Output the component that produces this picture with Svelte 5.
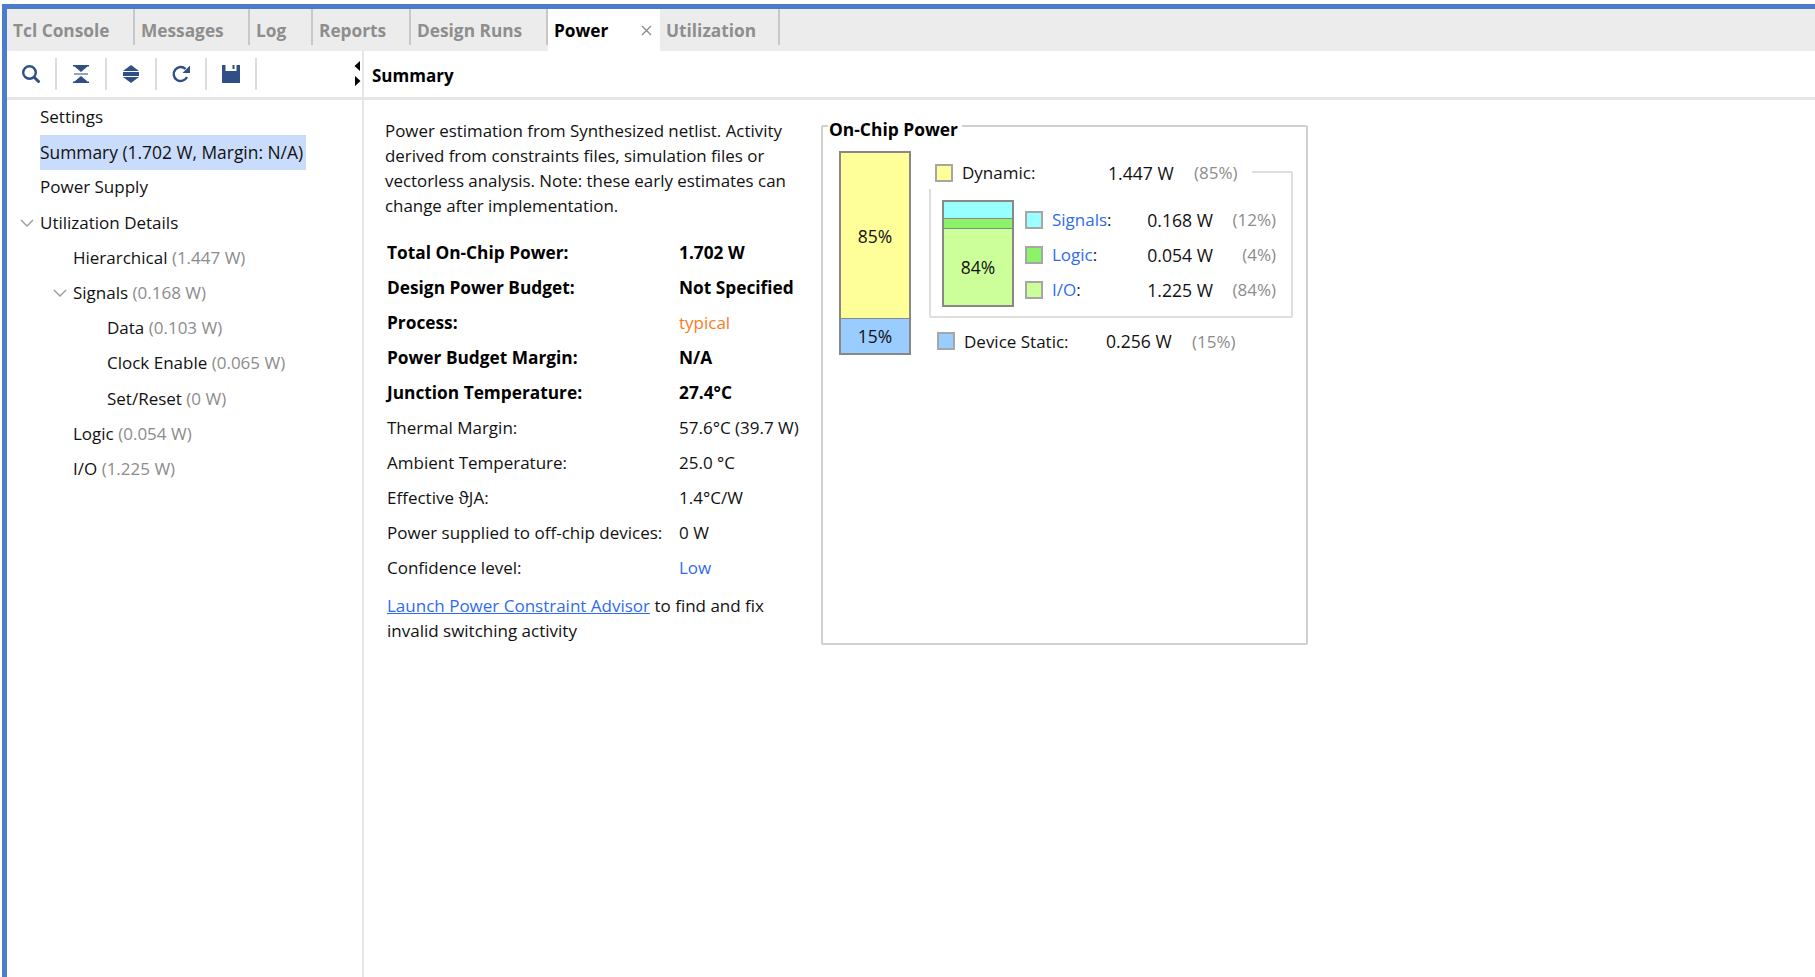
<script>
  const tabs = [
    { label: 'Tcl Console', width: 128 },
    { label: 'Messages', width: 115 },
    { label: 'Log', width: 63 },
    { label: 'Reports', width: 98 },
    { label: 'Design Runs', width: 137 },
    { label: 'Power', width: 112, active: true },
    { label: 'Utilization', width: 120 }
  ]

  const tree = [
    { label: 'Settings', level: 0 },
    { label: 'Summary (1.702 W, Margin: N/A)', level: 0, selected: true },
    { label: 'Power Supply', level: 0 },
    { label: 'Utilization Details', level: 0, open: true },
    { label: 'Hierarchical', note: '(1.447 W)', level: 1 },
    { label: 'Signals', note: '(0.168 W)', level: 1, open: true },
    { label: 'Data', note: '(0.103 W)', level: 2 },
    { label: 'Clock Enable', note: '(0.065 W)', level: 2 },
    { label: 'Set/Reset', note: '(0 W)', level: 2 },
    { label: 'Logic', note: '(0.054 W)', level: 1 },
    { label: 'I/O', note: '(1.225 W)', level: 1 }
  ]

  const facts = [
    { key: 'Total On-Chip Power:', value: '1.702 W', bold: true },
    { key: 'Design Power Budget:', value: 'Not Specified', bold: true },
    { key: 'Process:', value: 'typical', bold: true, tone: 'orange' },
    { key: 'Power Budget Margin:', value: 'N/A', bold: true },
    { key: 'Junction Temperature:', value: '27.4°C', bold: true },
    { key: 'Thermal Margin:', value: '57.6°C (39.7 W)' },
    { key: 'Ambient Temperature:', value: '25.0 °C' },
    { key: 'Effective ϑJA:', value: '1.4°C/W' },
    { key: 'Power supplied to off-chip devices:', value: '0 W' },
    { key: 'Confidence level:', value: 'Low', tone: 'blue' }
  ]

  const dynamicRows = [
    { name: 'Signals', color: '#99ffff', watts: '0.168 W', pct: '(12%)' },
    { name: 'Logic', color: '#8cf26a', watts: '0.054 W', pct: '(4%)' },
    { name: 'I/O', color: '#ccff99', watts: '1.225 W', pct: '(84%)' }
  ]
</script>

<div class="window">
  <nav class="tabs">
    {#each tabs as tab}
      <div class="tab" class:active={tab.active} style="width: {tab.width}px">
        <span>{tab.label}</span>
        {#if tab.active}
          <svg class="close" width="11" height="11" viewBox="0 0 11 11">
            <path d="M1 1 L10 10 M10 1 L1 10" stroke="#8a8a8a" stroke-width="1.3" />
          </svg>
        {/if}
      </div>
    {/each}
  </nav>

  <div class="body">
    <aside class="side">
      <div class="toolbar">
        <button aria-label="Search">
          <svg width="22" height="22" viewBox="0 0 22 22">
            <circle cx="9.5" cy="9.5" r="6.3" fill="none" stroke="#2f4f86" stroke-width="2.4" />
            <path d="M14.5 14.5 L18.5 18.5" stroke="#2f4f86" stroke-width="3" stroke-linecap="round" />
          </svg>
        </button>
        <button aria-label="Collapse all">
          <svg width="16" height="18" viewBox="0 0 16 18">
            <path d="M0 0 H16 V1.5 H14.5 L8 7 L1.5 1.5 H0 Z M1 8.4 H15 V9.6 H1 Z M8 11 L14.5 16.5 H16 V18 H0 V16.5 H1.5 Z" fill="#2f4f86" />
          </svg>
        </button>
        <button aria-label="Expand all">
          <svg width="16" height="18" viewBox="0 0 16 18">
            <path d="M8 0 L16 6 H0 Z M0 7 H16 V11 H0 Z M0 12 H16 L8 18 Z" fill="#2f4f86" />
          </svg>
        </button>
        <button aria-label="Refresh">
          <svg width="20" height="20" viewBox="0 0 20 20">
            <path d="M16 13 A7 7 0 1 1 14.6 5" fill="none" stroke="#2f4f86" stroke-width="2.4" />
            <path d="M19 1.5 V9 H11.5 Z" fill="#2f4f86" />
          </svg>
        </button>
        <button aria-label="Save">
          <svg width="18" height="18" viewBox="0 0 18 18">
            <path fill-rule="evenodd" d="M0 0 H18 V18 H0 Z M3.5 0 V6 H14.5 V0 H12.5 V4 H10.5 V0 Z" fill="#2f4f86" />
          </svg>
        </button>
        <div class="sash" aria-hidden="true">
          <svg width="7" height="28" viewBox="0 0 7 28">
            <path d="M6 1 V11 L0.5 6 Z M1 16 L6.5 21 L1 26 Z" fill="#000" />
          </svg>
        </div>
      </div>
      <ul class="tree">
        {#each tree as node}
          <li class="node level-{node.level}">
            {#if node.open}
              <svg class="chevron" width="14" height="8" viewBox="0 0 14 8">
                <path d="M1 1 L7 7 L13 1" fill="none" stroke="#9a9a9a" stroke-width="1.4" />
              </svg>
            {/if}
            <span class:selected={node.selected}>{node.label}{#if node.note}{' '}<em>{node.note}</em>{/if}</span>
          </li>
        {/each}
      </ul>
    </aside>

    <main class="main">
      <header class="header">Summary</header>
      <div class="content">
        <section class="info">
          <p class="intro">Power estimation from Synthesized netlist. Activity derived from constraints files, simulation files or vectorless analysis. Note: these early estimates can change after implementation.</p>
          <div class="facts">
            {#each facts as fact}
              <div class="fact" class:bold={fact.bold}>{fact.key}</div>
              <div class="fact value {fact.tone ?? ''}" class:bold={fact.bold && !fact.tone}>{fact.value}</div>
            {/each}
          </div>
          <p class="advice"><a href="#advisor">Launch Power Constraint Advisor</a> to find and fix invalid switching activity</p>
        </section>

        <fieldset class="chip">
          <legend>On-Chip Power</legend>
          <div class="chip-body">
            <div class="bar outer">
              <div class="seg yellow">85%</div>
              <div class="seg sky">15%</div>
            </div>
            <div class="breakdown">
              <div class="dynamic-box">
                <div class="line dynamic">
                  <i class="swatch yellow"></i>
                  <span class="name">Dynamic:</span>
                  <span class="watts">1.447 W</span>
                  <span class="pct">(85%)</span>
                </div>
                <div class="dynamic-body">
                  <div class="bar inner">
                    <div class="seg top"></div>
                    <div class="seg mid"></div>
                    <div class="seg lime">84%</div>
                  </div>
                  <div class="rows">
                    {#each dynamicRows as row}
                      <div class="row">
                        <i class="swatch" style="background: {row.color}"></i>
                        <span class="row-name"><b>{row.name}</b>:</span>
                        <span class="row-watts">{row.watts}</span>
                        <span class="row-pct">{row.pct}</span>
                      </div>
                    {/each}
                  </div>
                </div>
              </div>
              <div class="line static">
                <i class="swatch sky"></i>
                <span class="name">Device Static:</span>
                <span class="watts">0.256 W</span>
                <span class="pct">(15%)</span>
              </div>
            </div>
          </div>
        </fieldset>
      </div>
    </main>
  </div>
</div>

<style>
  :global(body) {
    margin: 0;
    background: #fff;
  }

  .window {
    box-sizing: border-box;
    margin: 4px 0 0 2px;
    height: 973px;
    border-top: 5px solid #4d7ccb;
    border-left: 5px solid #4d7ccb;
    font-family: "Open Sans", "Noto Sans", sans-serif;
    font-size: 17px;
    color: #111;
    display: flex;
    flex-direction: column;
    overflow: hidden;
  }

  .tabs {
    display: flex;
    height: 42px;
    flex: none;
    background: #ececec;
  }

  .tab {
    box-sizing: border-box;
    height: 36px;
    padding: 10px 0 0 6px;
    border-right: 2px solid #c8c8c8;
    font-size: 17.3px;
    line-height: 24px;
    font-weight: 700;
    color: #8e8e8e;
    white-space: nowrap;
  }

  .tab.active {
    height: 42px;
    background: #fff;
    color: #000;
    border-right: 0;
    position: relative;
  }

  .close {
    position: absolute;
    left: 93px;
    top: 16px;
  }

  .body {
    flex: 1;
    display: flex;
    min-height: 0;
  }

  .side {
    width: 355px;
    flex: none;
    border-right: 2px solid #e6e6e6;
  }

  .toolbar {
    height: 46px;
    border-bottom: 3px solid #e6e6e6;
    display: flex;
    align-items: center;
    position: relative;
  }

  .toolbar button {
    width: 50px;
    height: 32px;
    padding: 0;
    border: 0;
    background: none;
    border-right: 2px solid #dcdcdc;
    display: flex;
    align-items: center;
    justify-content: center;
  }

  .sash {
    position: absolute;
    left: 347px;
    top: 9px;
    line-height: 0;
  }

  .tree {
    list-style: none;
    margin: 0;
    padding: 0;
  }

  .node {
    height: 35.2px;
    line-height: 34px;
    white-space: nowrap;
    position: relative;
  }

  .level-0 { padding-left: 33px; }
  .level-1 { padding-left: 66px; }
  .level-2 { padding-left: 100px; }

  .node span {
    display: inline-block;
    height: 35px;
  }

  .selected {
    background: #c9dcfb;
    padding-right: 3px;
    font-size: 17.4px;
  }

  .node em {
    font-style: normal;
    color: #8c8c8c;
  }

  .chevron {
    position: absolute;
    top: 13px;
  }

  .level-0 .chevron { left: 13px; }
  .level-1 .chevron { left: 46px; }

  .main {
    flex: 1;
    min-width: 0;
  }

  .header {
    height: 49px;
    box-sizing: border-box;
    border-bottom: 3px solid #e6e6e6;
    padding-left: 8px;
    line-height: 49px;
    font-size: 17px;
    font-weight: 700;
    color: #000;
  }

  .content {
    display: flex;
    align-items: flex-start;
    padding-top: 18px;
  }

  .info {
    width: 400px;
    padding-left: 21px;
    flex: none;
  }

  .intro {
    margin: 0 -8px 17px 0;
    font-size: 16.9px;
    line-height: 25px;
  }

  .facts {
    display: grid;
    grid-template-columns: 292px 1fr;
    grid-auto-rows: 35px;
    padding-left: 2px;
    line-height: 35px;
    white-space: nowrap;
  }

  .fact.bold {
    font-weight: 700;
    font-size: 17.3px;
    color: #000;
  }

  .orange { color: #f97d1d; }
  .blue { color: #2f6bf2; }

  .advice {
    margin: 8px 0 0 2px;
    line-height: 25px;
  }

  .advice a {
    color: #2f6bf2;
  }

  .chip {
    box-sizing: border-box;
    width: 487px;
    height: 530px;
    margin: -3px 0 0 36px;
    padding: 0;
    border: 2px solid #d0d0d0;
    border-radius: 2px;
    min-width: 0;
  }

  .chip legend {
    margin-left: 5px;
    padding: 0 4px 0 1px;
    font-size: 17.4px;
    font-weight: 700;
    color: #000;
    line-height: 22px;
    position: relative;
    top: 3px;
  }

  .chip-body {
    display: flex;
    padding: 14px 0 0 16px;
  }

  .bar {
    box-sizing: border-box;
    border: 2px solid #888;
    display: flex;
    flex-direction: column;
    flex: none;
    text-align: center;
  }

  .outer {
    width: 72px;
    height: 204px;
  }

  .seg {
    display: flex;
    align-items: center;
    justify-content: center;
    font-size: 17.5px;
  }

  .seg + .seg {
    border-top: 1px solid #888;
  }

  .outer .yellow { height: 165px; }
  .outer .sky { flex: 1; }
  .yellow { background: #ffff99; }
  .sky { background: #99ccff; }

  .breakdown {
    flex: 1;
    padding: 20px 13px 0 18px;
    min-width: 0;
  }

  .dynamic-box {
    box-sizing: border-box;
    height: 147px;
    border: 2px solid #dedede;
    border-radius: 2px;
    position: relative;
    padding-top: 27px;
  }

  .line {
    display: flex;
    align-items: center;
    white-space: nowrap;
  }

  .dynamic {
    position: absolute;
    left: -2px;
    top: -14px;
    height: 30px;
    width: 323px;
    padding: 0 0 3px 6px;
    box-sizing: border-box;
    background: #fff;
  }

  .swatch {
    display: block;
    box-sizing: border-box;
    width: 18px;
    height: 18px;
    border: 2px solid #a6a6a6;
    flex: none;
  }

  .name {
    margin-left: 9px;
    width: 146px;
  }

  .static .name {
    width: 142px;
  }

  .watts {
    width: 86px;
    font-size: 17.6px;
  }

  .pct, .row-pct {
    color: #8c8c8c;
  }

  .dynamic-body {
    display: flex;
    padding-left: 11px;
  }

  .inner {
    box-sizing: border-box;
    width: 72px;
    height: 107px;
  }

  .top { height: 16px; background: #99ffff; }
  .mid { height: 9px; background: #8cf26a; }
  .lime { flex: 1; background: #ccff99; }

  .rows {
    display: flex;
    flex-direction: column;
    padding: 2px 0 0 11px;
    flex: 1;
  }

  .row {
    display: flex;
    align-items: center;
    height: 35px;
    white-space: nowrap;
  }

  .row-name {
    margin-left: 9px;
    width: 95px;
  }

  .row-name b {
    font-weight: 400;
    color: #2f6bf2;
  }

  .row-watts {
    width: 66px;
    text-align: right;
    font-size: 17.6px;
  }

  .row-pct {
    width: 63px;
    text-align: right;
  }

  .static {
    margin: 11px 0 0 8px;
  }
</style>
